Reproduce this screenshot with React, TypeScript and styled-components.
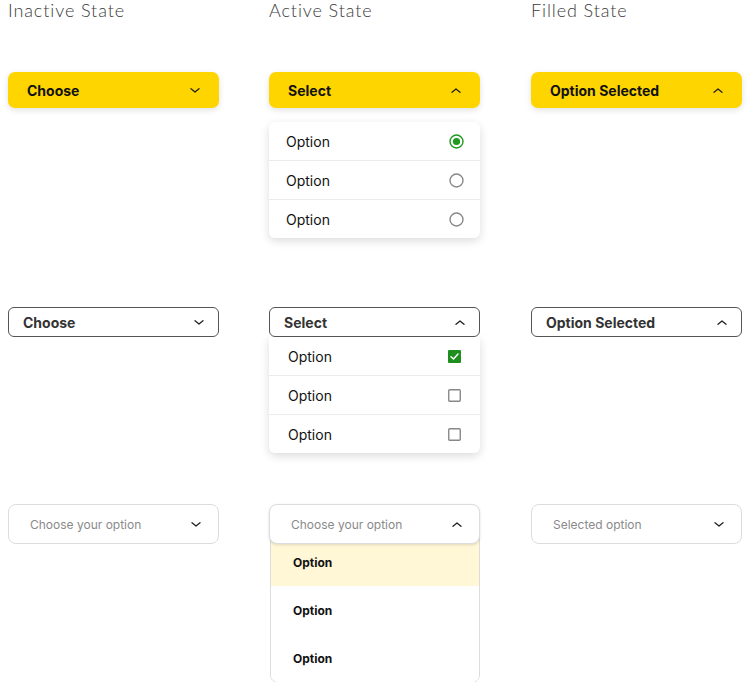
import styled, { createGlobalStyle, css } from 'styled-components'

const GlobalStyle = createGlobalStyle`
  body {
    margin: 0;
    background: #fff;
    font-family: Inter, "Noto Sans", sans-serif;
  }
`

type Variant = 'solid' | 'outline' | 'soft'
type Mark = 'radio' | 'check' | 'none'

const Page = styled.div`
  display: grid;
  grid-template-columns: 261px 262px 211px;
  grid-template-rows: 72px 235px 197px auto;
  padding-left: 8px;
  width: 750px;
  height: 682px;
  overflow: hidden;
  box-sizing: border-box;
  align-items: start;
`

const Heading = styled.h2`
  margin: 0;
  font-family: Lato, "Open Sans", sans-serif;
  font-weight: 300;
  font-size: 18px;
  line-height: 20px;
  letter-spacing: 0.9px;
  color: #3a3a3a;
`

const Cell = styled.div`
  display: flex;
  flex-direction: column;
  width: 211px;
`

const Trigger = styled.div<{ $variant: Variant; $open?: boolean }>`
  display: flex;
  align-items: center;
  justify-content: space-between;
  box-sizing: border-box;
  position: relative;
  z-index: 2;
  background: #fff;

  ${(p) =>
    p.$variant === 'solid' &&
    css`
      height: 36px;
      padding: 0 19px;
      border-radius: 7px;
      background: #ffd500;
      box-shadow: 0 2px 6px rgba(0, 0, 0, 0.12);
      font-size: 14px;
      font-weight: 700;
      color: #111;
    `}

  ${(p) =>
    p.$variant === 'outline' &&
    css`
      height: 30px;
      padding: 0 14px;
      border: 1px solid #555;
      border-radius: 6px;
      font-size: 14px;
      font-weight: 700;
      color: #333;
    `}

  ${(p) =>
    p.$variant === 'soft' &&
    css`
      height: 40px;
      padding: 0 17px 0 21px;
      border: 1px solid #dcdcdc;
      border-radius: 8px;
      font-size: 12px;
      font-weight: 400;
      color: #8a8a8a;
      box-shadow: ${p.$open ? '0 1px 3px rgba(0,0,0,0.12)' : 'none'};
    `}
`

const Chevron = ({ up }: { up?: boolean }) => (
  <svg width="10" height="5" viewBox="0 0 10 5" fill="none">
    <path
      d={up ? 'M1 4.3L5 1L9 4.3' : 'M1 0.7L5 4L9 0.7'}
      stroke="#222"
      strokeWidth="1.3"
      strokeLinecap="round"
      strokeLinejoin="round"
    />
  </svg>
)

const Menu = styled.div<{ $variant: Variant }>`
  display: flex;
  flex-direction: column;
  background: #fff;
  overflow: hidden;

  ${(p) =>
    p.$variant === 'solid' &&
    css`
      margin-top: 14px;
      border-radius: 6px;
      box-shadow: 0 3px 10px rgba(0, 0, 0, 0.14);
    `}

  ${(p) =>
    p.$variant === 'outline' &&
    css`
      border-radius: 0 0 6px 6px;
      box-shadow: 0 3px 10px rgba(0, 0, 0, 0.14);
    `}

  ${(p) =>
    p.$variant === 'soft' &&
    css`
      margin-top: -7px;
      margin-left: 1px;
      border: 1px solid #dcdcdc;
      border-radius: 0 0 8px 8px;
    `}
`

const Item = styled.div<{ $variant: Variant; $active?: boolean }>`
  display: flex;
  align-items: center;
  justify-content: space-between;
  box-sizing: border-box;
  color: #111;

  ${(p) =>
    p.$variant === 'solid' &&
    css`
      height: 39px;
      padding: 0 16px 0 17px;
      font-size: 14px;
    `}

  ${(p) =>
    p.$variant === 'outline' &&
    css`
      height: 39px;
      padding: 0 19px;
      font-size: 14px;
    `}

  ${(p) =>
    p.$variant === 'soft' &&
    css`
      height: 48px;
      padding: 0 22px;
      font-size: 12px;
      font-weight: 700;
      background: ${p.$active ? '#fff7d6' : '#fff'};
    `}

  &:not(:last-child) {
    border-bottom: ${(p) => (p.$variant === 'soft' ? 'none' : '1px solid #ebebeb')};
  }
  &:last-child {
    height: ${(p) => (p.$variant === 'soft' ? '48px' : '38px')};
  }
`

const Radio = ({ on }: { on?: boolean }) => (
  <svg width="15" height="15" viewBox="0 0 15 15">
    <circle cx="7.5" cy="7.5" r="6.5" fill="#fff" stroke={on ? '#1e9a1e' : '#888'} strokeWidth="1.4" />
    {on && <circle cx="7.5" cy="7.5" r="3.6" fill="#1e9a1e" />}
  </svg>
)

const Check = ({ on }: { on?: boolean }) => (
  <svg width="13" height="13" viewBox="0 0 13 13">
    {on ? (
      <>
        <rect x="0" y="0" width="13" height="13" rx="1" fill="#1e8f1e" />
        <path d="M3 6.7L5.5 9L10 4" stroke="#fff" strokeWidth="1.4" fill="none" strokeLinecap="round" strokeLinejoin="round" />
      </>
    ) : (
      <rect x="0.75" y="0.75" width="11.5" height="11.5" rx="1" fill="#fff" stroke="#888" strokeWidth="1.4" />
    )}
  </svg>
)

type DropdownProps = {
  variant: Variant
  label: string
  open?: boolean
  chevronUp?: boolean
  mark?: Mark
}

const Dropdown = ({ variant, label, open, chevronUp, mark = 'none' }: DropdownProps) => (
  <Cell>
    <Trigger $variant={variant} $open={open}>
      <span>{label}</span>
      <Chevron up={chevronUp} />
    </Trigger>
    {open && (
      <Menu $variant={variant}>
        {[0, 1, 2].map((i) => (
          <Item key={i} $variant={variant} $active={i === 0}>
            <span>Option</span>
            {mark === 'radio' && <Radio on={i === 0} />}
            {mark === 'check' && <Check on={i === 0} />}
          </Item>
        ))}
      </Menu>
    )}
  </Cell>
)

export default function App() {
  return (
    <>
      <GlobalStyle />
      <Page>
        <Heading>Inactive State</Heading>
        <Heading>Active State</Heading>
        <Heading>Filled State</Heading>

        <Dropdown variant="solid" label="Choose" />
        <Dropdown variant="solid" label="Select" open chevronUp mark="radio" />
        <Dropdown variant="solid" label="Option Selected" chevronUp />

        <Dropdown variant="outline" label="Choose" />
        <Dropdown variant="outline" label="Select" open chevronUp mark="check" />
        <Dropdown variant="outline" label="Option Selected" chevronUp />

        <Dropdown variant="soft" label="Choose your option" />
        <Dropdown variant="soft" label="Choose your option" open chevronUp />
        <Dropdown variant="soft" label="Selected option" />
      </Page>
    </>
  )
}
